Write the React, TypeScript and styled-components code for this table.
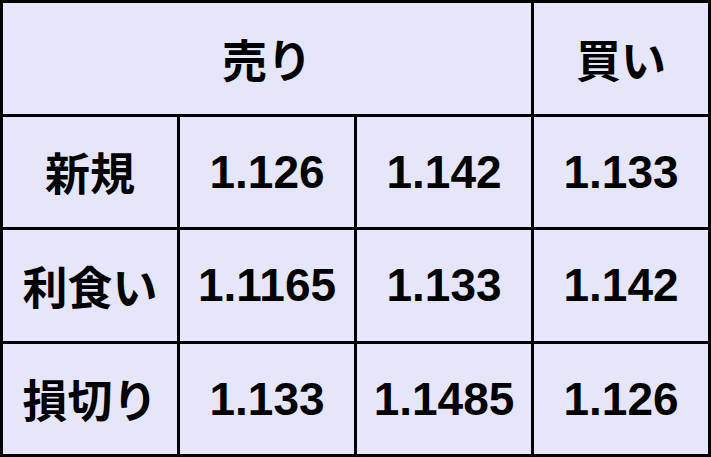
import styled, { createGlobalStyle } from "styled-components";

const GlobalStyle = createGlobalStyle`
  html, body {
    margin: 0;
    padding: 0;
    background: #ffffff;
  }
`;

const rows = [
  { label: "新規", values: ["1.126", "1.142", "1.133"] },
  { label: "利食い", values: ["1.1165", "1.133", "1.142"] },
  { label: "損切り", values: ["1.133", "1.1485", "1.126"] },
];

const Table = styled.div`
  width: 711px;
  height: 457px;
  box-sizing: border-box;
  display: grid;
  grid-template-columns: repeat(4, 1fr);
  grid-template-rows: repeat(4, 1fr);
  gap: 3px;
  padding: 3px;
  background: #000000;
`;

const Cell = styled.div<{ $span?: number; $kana?: boolean }>`
  grid-column: span ${({ $span }) => $span ?? 1};
  background: #e6e6fb;
  display: flex;
  align-items: center;
  justify-content: center;
  color: #000000;
  font-weight: bold;
  font-family: ${({ $kana }) =>
    $kana
      ? `"Noto Sans CJK JP", "Liberation Sans", sans-serif`
      : `"Liberation Sans", Arial, sans-serif`};
  font-size: ${({ $kana }) => ($kana ? "45px" : "46px")};
  white-space: nowrap;
`;

const App = () => {
  return (
    <>
      <GlobalStyle />
      <Table>
        <Cell $span={3} $kana>
          売り
        </Cell>
        <Cell $kana>買い</Cell>
        {rows.map((row) => (
          <>
            <Cell key={row.label} $kana>
              {row.label}
            </Cell>
            {row.values.map((v, i) => (
              <Cell key={row.label + i}>{v}</Cell>
            ))}
          </>
        ))}
      </Table>
    </>
  );
};

export default App;
